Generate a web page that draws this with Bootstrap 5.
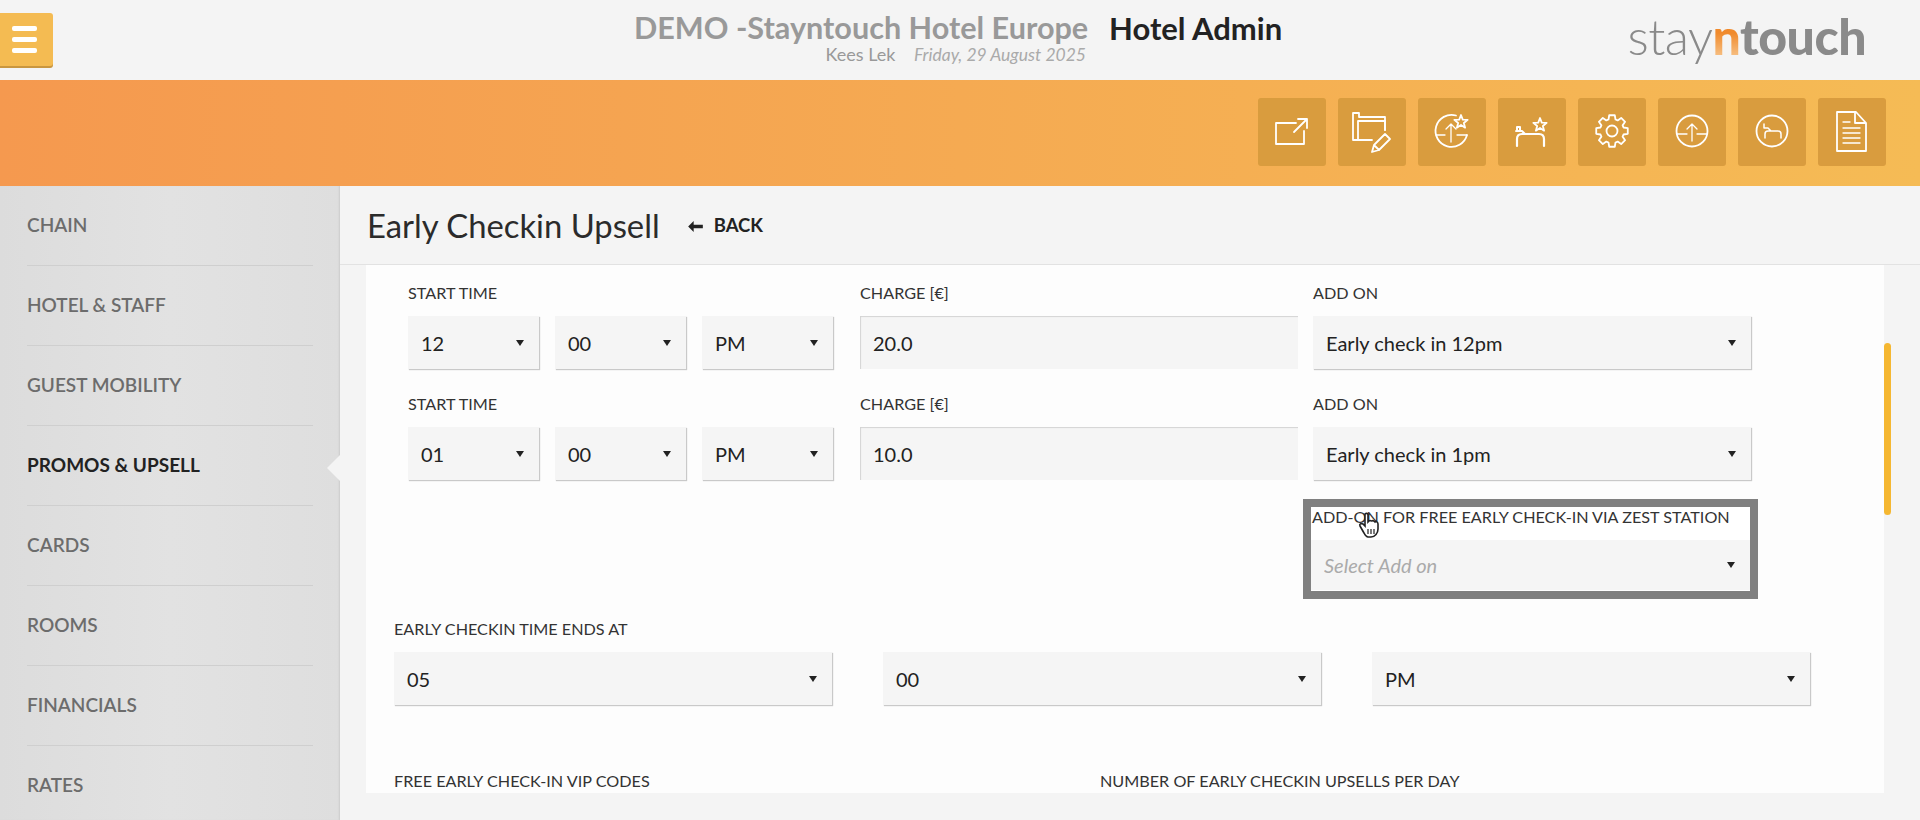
<!DOCTYPE html>
<html lang="en"><head><meta charset="utf-8"><title>Early Checkin Upsell</title>
<link rel="stylesheet" href="https://cdn.jsdelivr.net/npm/bootstrap@5.3.0/dist/css/bootstrap.min.css">
<style>
html,body{height:820px;overflow:hidden}
body{font-family:"Lato","Noto Sans",sans-serif;background:#f4f4f4;color:#222}
.top-bar{height:80px;background:#f4f4f4}
.menu-btn{width:53px;height:53px;margin-top:13px;background:#f4bb52;border:0;border-radius:0 3px 3px 0;box-shadow:0 2px 0 #c9963f;padding:0 0 0 12px}
.menu-btn i{display:block;width:25px;height:5px;border-radius:2px;background:#fff;margin-bottom:6px}
.menu-btn i:last-child{margin-bottom:0}
.title-box{left:634px;top:10px;width:660px}
.hotel-name{font-size:30.6px;font-weight:700;color:#999;line-height:36px;width:454px;white-space:nowrap}
.app-name{font-size:31px;font-weight:700;color:#222;line-height:36px;margin-left:21px;white-space:nowrap}
.sub-line{width:452px;font-size:17.5px;line-height:18px;margin-top:-1px;color:#999;white-space:nowrap}
.sub-line strong{font-weight:400;font-size:18px}
.sub-line em{color:#aaa;margin-left:14px}
.brand-mark{font-size:50px;line-height:60px;letter-spacing:-.5px;color:#8a8a8a;margin:6px 54px 0 0;font-weight:300;white-space:nowrap}
.brand-mark b{font-weight:900}
.brand-mark .brand-n{background:linear-gradient(#f08a2c 45%,#f9d6a8);-webkit-background-clip:text;background-clip:text;color:transparent}
.band{height:106px;background:linear-gradient(90deg,#f5994f,#f5bb55);padding:18px 34px 0 0;gap:12px}
.tool-tile{width:68px;height:68px;background:#d99c3e;border-radius:3px}
.tool-tile svg{display:block;width:68px;height:68px;fill:none;stroke:#fff;stroke-width:1.8;stroke-linecap:round;stroke-linejoin:round}
.workspace{height:634px}
.side-nav{width:340px;background:linear-gradient(90deg,#dcdcdc,#e2e2e2 50%,#dedede);box-shadow:inset -2px 0 2px -1px #ccc}
.side-item{height:80px;margin:0 27px;color:#6c6c6c;font-size:19px;font-weight:600;line-height:77px;border-bottom:1px solid #cfcfcf;white-space:nowrap}
.side-item.on{color:#222;font-weight:700}
.side-item.on::after{content:"";position:absolute;right:-27px;top:29px;border:13px solid transparent;border-right-color:#f4f4f4;border-left:0}
.page-area{width:1580px;padding:0 36px 0 26px}
.page-head{height:79px;gap:28px;border-bottom:1px solid #e2e2e2;margin:0 -36px 0 -26px;padding:2px 0 0 27px}
.page-head h1{font-size:32.8px;font-weight:400;line-height:1;margin:0;color:#2b2b2b}
.back-link{font-size:18.5px;font-weight:700;color:#222;text-decoration:none;gap:11px}
.back-link svg{width:15px;height:11px;fill:#222}
.form-sheet{height:528px;background:#fdfdfd;overflow:hidden;padding:17px 0 0 28px}
.entry-row{display:flex;padding-left:14px;height:111px}
.time-group{display:flex;gap:16px;width:425px;margin-right:27px}
.time-group>*{flex:1}
.col-charge{width:438px;margin-right:15px}
.col-addon{width:438px}
.field-label{display:block;font-size:16.2px;line-height:21px;color:#333;margin:0 0 13px;text-transform:uppercase;white-space:nowrap}
.form-select.sheet-select,.form-control.sheet-input{height:53px;background-color:#f5f5f5;border:0;border-radius:0;color:#222;font-size:20px;padding:0 13px;box-shadow:1px 1px 1px #c9c9c9;font-family:inherit}
.form-select.sheet-select{background-image:url("data:image/svg+xml,%3Csvg xmlns='http://www.w3.org/2000/svg' width='8' height='6'%3E%3Cpath d='M0 0h8L4 6z' fill='%23222'/%3E%3C/svg%3E");background-size:8px 6px;background-position:right 15px center}
.form-control.sheet-input{box-shadow:inset 1px 1px 1px #d4d4d4}
.sheet-select.placeholder-look{font-style:italic;color:#aaa;box-shadow:none}
.zest-gap{padding-left:909px;margin-top:-5px}
.zest-box{width:455px;height:100px;border:8px solid #808080;background:#fff}
.zest-box .field-label{margin:0 0 14px 1px;line-height:19px}
.form-select.sheet-select.placeholder-look{height:50px}
.ends-label{margin:19px 0 13px}
.ends-row{display:flex;gap:51px}
.ends-row>select.form-select.sheet-select{flex:none;width:438px}
.vip-row{display:flex;margin-top:65px}
.vip-row>label:first-child{width:706px}
.scroll-thumb{right:29px;top:157px;width:7px;height:172px;border-radius:4px;background:#f5b731}
.hand-cursor{left:1358px;top:512px;width:22px;height:26px}
</style></head><body>
<header class="top-bar d-flex justify-content-between position-relative">
  <button class="menu-btn" aria-label="Menu"><i></i><i></i><i></i></button>
  <div class="title-box position-absolute">
    <div class="d-flex"><span class="hotel-name">DEMO -Stayntouch Hotel Europe</span><span class="app-name">Hotel Admin</span></div>
    <div class="sub-line text-end"><strong>Kees Lek</strong> <em>Friday, 29 August 2025</em></div>
  </div>
  <div class="brand-mark">stay<b class="brand-n">n</b><b>touch</b></div>
</header>
<div class="band d-flex justify-content-end">
  <div class="tool-tile"><svg viewBox="0 0 68 68"><path d="M38 25H18v21h28V33"/><path d="M36 34 49 21M40 21h9v9"/></svg></div>
  <div class="tool-tile"><svg viewBox="0 0 68 68"><path d="M20 42h-5V15h6v4h26v13"/><path d="M20 42V23h27v9M20 42h14"/><path d="M34 54l2-7 11-11 5 5-11 11zM36 47l5 5"/></svg></div>
  <div class="tool-tile"><svg viewBox="0 0 68 68"><path d="M38 17.5A16 16 0 1 0 49 37"/><path d="M18 37h9M39 37h10M33 44V26M28 31l5-5 5 5" stroke-width="1.3"/><path transform="translate(43 24)" d="M0-7 1.76-2.43 6.66-2.16 2.85.93 4.11 5.66 0 3-4.11 5.66-2.85.93-6.66-2.16-1.76-2.43Z"/></svg></div>
  <div class="tool-tile"><svg viewBox="0 0 68 68"><path d="M19 48v-7c0-3 2-5 5-5h17c3 0 5 2 5 5v7" stroke-width="2.2"/><path d="M18 33h6l3 3h10M19 33v-4h3v4" stroke-width="2"/><path transform="translate(42 27)" d="M0-7 1.76-2.43 6.66-2.16 2.85.93 4.11 5.66 0 3-4.11 5.66-2.85.93-6.66-2.16-1.76-2.43Z"/></svg></div>
  <div class="tool-tile"><svg viewBox="0 0 68 68"><polygon transform="translate(34 33)" points="15.76,2.78 11.48,3.51 10.6,5.63 13.1,9.18 9.18,13.1 5.63,10.6 3.51,11.48 2.78,15.76 -2.78,15.76 -3.51,11.48 -5.63,10.6 -9.18,13.1 -13.1,9.18 -10.6,5.63 -11.48,3.51 -15.76,2.78 -15.76,-2.78 -11.48,-3.51 -10.6,-5.63 -13.1,-9.18 -9.18,-13.1 -5.63,-10.6 -3.51,-11.48 -2.78,-15.76 2.78,-15.76 3.51,-11.48 5.63,-10.6 9.18,-13.1 13.1,-9.18 10.6,-5.63 11.48,-3.51 15.76,-2.78"/><circle cx="34" cy="33" r="5.5"/></svg></div>
  <div class="tool-tile"><svg viewBox="0 0 68 68"><circle cx="34" cy="33" r="15.5"/><path d="M19 36h10M39 36h10M34 43V26M29 31l5-5 5 5" stroke-width="1.3"/></svg></div>
  <div class="tool-tile"><svg viewBox="0 0 68 68"><circle cx="34" cy="33" r="15.5"/><path d="M26 26v4h4l3 3h7c2 0 3 1 3 3v4M27 40v-4c0-2 1-3 3-3h3" stroke-width="1.5"/></svg></div>
  <div class="tool-tile"><svg viewBox="0 0 68 68"><path d="M19 14h19l10 11v28H19zM37 14v11h11"/><path d="M25 24h7M25 30h17M25 35h17M25 40h17M25 45h17" stroke-width="1.3"/></svg></div>
</div>
<div class="workspace d-flex position-relative">
  <nav class="side-nav flex-shrink-0">
    <div class="side-item">CHAIN</div>
    <div class="side-item">HOTEL &amp; STAFF</div>
    <div class="side-item">GUEST MOBILITY</div>
    <div class="side-item on position-relative">PROMOS &amp; UPSELL</div>
    <div class="side-item">CARDS</div>
    <div class="side-item">ROOMS</div>
    <div class="side-item">FINANCIALS</div>
    <div class="side-item">RATES</div>
  </nav>
  <main class="page-area">
    <div class="page-head d-flex align-items-center">
      <h1>Early Checkin Upsell</h1>
      <a class="back-link d-flex align-items-center" href="#"><svg viewBox="0 0 16 12"><path d="M6 0 0 6l6 6V8h10V4H6z"/></svg>BACK</a>
    </div>
    <section class="form-sheet">
      <div class="entry-row">
        <div><label class="field-label">Start time</label><div class="time-group"><select class="form-select sheet-select"><option>12</option></select><select class="form-select sheet-select"><option>00</option></select><select class="form-select sheet-select"><option>PM</option></select></div></div>
        <div class="col-charge"><label class="field-label">Charge [€]</label><input class="form-control sheet-input" value="20.0"></div>
        <div class="col-addon"><label class="field-label">Add on</label><select class="form-select sheet-select"><option>Early check in 12pm</option></select></div>
      </div>
      <div class="entry-row">
        <div><label class="field-label">Start time</label><div class="time-group"><select class="form-select sheet-select"><option>01</option></select><select class="form-select sheet-select"><option>00</option></select><select class="form-select sheet-select"><option>PM</option></select></div></div>
        <div class="col-charge"><label class="field-label">Charge [€]</label><input class="form-control sheet-input" value="10.0"></div>
        <div class="col-addon"><label class="field-label">Add on</label><select class="form-select sheet-select"><option>Early check in 1pm</option></select></div>
      </div>
      <div class="zest-gap"><div class="zest-box"><label class="field-label">Add-on for free early check-in via ZEST station</label><select class="form-select sheet-select placeholder-look"><option>Select Add on</option></select></div></div>
      <label class="field-label ends-label">Early checkin time ends at</label>
      <div class="ends-row"><select class="form-select sheet-select"><option>05</option></select><select class="form-select sheet-select"><option>00</option></select><select class="form-select sheet-select"><option>PM</option></select></div>
      <div class="vip-row"><label class="field-label">Free early check-in VIP codes</label><label class="field-label">Number of early checkin upsells per day</label></div>
    </section>
  </main>
  <div class="scroll-thumb position-absolute"></div>
</div>
<svg class="hand-cursor position-absolute" viewBox="0 0 22 26"><path d="M7 2c1-1 3-1 3 1v7l1-1c1-1 2 0 3 0 1-1 2 0 3 1 1-1 3 0 3 2v5c0 4-3 8-7 8H10c-2 0-3-2-4-4L2 14c-1-2 1-3 3-2l2 2z" fill="#fff" stroke="#222" stroke-width="1.6"/><path d="M10 17v5M13 17v5M16 17v5" stroke="#333" stroke-width="1.3"/></svg>
<script src="https://cdn.jsdelivr.net/npm/bootstrap@5.3.0/dist/js/bootstrap.bundle.min.js"></script>
</body></html>
